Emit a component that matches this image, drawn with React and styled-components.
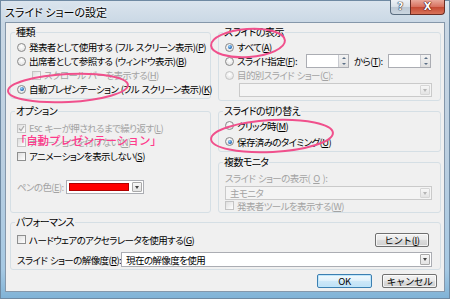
import React from "react";
import styled, { createGlobalStyle, css } from "styled-components";

const GlobalStyle = createGlobalStyle`
  html, body { margin: 0; padding: 0; background: #fff; }
  body {
    font-family: "Noto Sans CJK JP", "Noto Sans", sans-serif;
    font-size: 9.5px;
    line-height: 12px;
    letter-spacing: -0.6px;
    word-spacing: 1px;
    font-feature-settings: "palt";
  }
`;

const Window = styled.div`
  position: relative;
  width: 450px;
  height: 299px;
  box-sizing: border-box;
  padding: 0 5px 7px 5px;
  display: flex;
  flex-direction: column;
  overflow: hidden;
  background: linear-gradient(to bottom, #dbe5ee 0%, #c9d7e4 8%, #bccfe0 50%, #a6c9e3 90%, #7fb2d6 100%);
  box-shadow: inset 0 0 0 1px #6f8aa3;
`;

const TitleBar = styled.div`
  display: flex;
  align-items: flex-start;
  height: 22px;
  flex: none;
`;

const Title = styled.div`
  padding: 5px 0 0 0;
  font-size: 11px;
  line-height: 14px;
  letter-spacing: 0;
  word-spacing: 0;
  color: #000;
  text-shadow: 0 0 4px #fff, 0 0 2px #fff;
`;

const Caption = styled.div`
  display: flex;
  margin-left: auto;
`;

const CaptionButton = styled.div`
  height: 15px;
  box-sizing: border-box;
  display: flex;
  align-items: center;
  justify-content: center;
  font-family: "DejaVu Sans", sans-serif;
  font-weight: bold;
  font-size: 10px;
  letter-spacing: 0;
  color: #fff;
  border: 1px solid #5a6d80;
  border-top: none;
`;

const HelpButton = styled(CaptionButton)`
  width: 20px;
  border-right: none;
  border-radius: 0 0 0 4px;
  background: linear-gradient(to bottom, #eef2f6 0%, #d7e0e8 50%, #bcc8d4 51%, #cbd6e0 100%);
  text-shadow: 0 0 1px #223, 0 0 1px #223, 0 0 1px #223;
`;

const CloseButton = styled(CaptionButton)`
  width: 35px;
  border-radius: 0 0 4px 0;
  border-color: #6b2d24;
  background: linear-gradient(to bottom, #e9a99b 0%, #d7705d 50%, #c44a33 51%, #d9735a 100%);
  text-shadow: 0 0 1px #400, 0 0 1px #400, 0 0 1px #400;
`;

const Client = styled.div`
  flex: 1;
  display: flex;
  flex-direction: column;
  background: #f0f0f0;
  border: 1px solid #8597aa;
  padding: 3px 3px 0 4px;
  color: #000;
`;

const Columns = styled.div`
  display: grid;
  grid-template-columns: 201px 1fr;
  column-gap: 7px;
`;

const Column = styled.div`
  display: flex;
  flex-direction: column;
  gap: ${p => p.$gap || 6}px;
`;

const Group = styled.fieldset`
  margin: 0;
  margin-top: ${p => p.$mt || 0}px;
  padding: 0 8px ${p => p.$pb ?? 3}px 6px;
  border: 1px solid #d5dfe5;
  border-radius: 3px;
  min-width: 0;
  display: flex;
  flex-direction: column;
  gap: ${p => p.$gap || 0}px;
  ${p => p.$grow && css`flex: 1;`}
`;

const Legend = styled.legend`
  padding: 0 1px;
  margin-left: -2px;
  font-size: 10px;
  line-height: 12px;
  color: #000;
`;

const Choice = styled.div`
  display: flex;
  align-items: center;
  gap: 3px;
  height: ${p => p.$h || 14}px;
  flex: none;
  margin-top: ${p => p.$mt || 0}px;
  padding-left: ${p => p.$indent || 0}px;
  color: ${p => (p.$disabled ? "#a3a3a3" : "#000")};
  white-space: nowrap;
`;

const Text = styled.span`
  ${p => p.$w && css`width: ${p.$w}px; flex: none;`}
`;

const Key = styled.u`
  text-underline-offset: 1px;
`;

const Radio = styled.span`
  position: relative;
  flex: none;
  width: 9px;
  height: 9px;
  box-sizing: border-box;
  border-radius: 50%;
  border: 1px solid ${p => (p.$disabled ? "#c4c4c4" : "#8a8a8a")};
  background: radial-gradient(circle at 50% 35%, #ffffff, #dcdcdc);
  ${p => p.$checked && css`
    &::after {
      content: "";
      position: absolute;
      inset: 1.5px;
      border-radius: 50%;
      background: radial-gradient(circle at 40% 35%, #9ad8ff, #1b5fb0 70%);
    }
  `}
`;

const Box = styled.span`
  flex: none;
  display: flex;
  width: 9px;
  height: 9px;
  box-sizing: border-box;
  border: 1px solid ${p => (p.$disabled ? "#c4c4c4" : "#8e8f8f")};
  background: linear-gradient(135deg, #dedede, #ffffff);
`;

const Check = ({ checked, disabled }) => (
  <Box $disabled={disabled}>
    {checked && (
      <svg width="7" height="7" viewBox="0 0 7 7">
        <path d="M1 3.5 L3 5.5 L6 1" fill="none" stroke={disabled ? "#a8a8a8" : "#333"} strokeWidth="1.2" />
      </svg>
    )}
  </Box>
);

const Field = styled.div`
  display: flex;
  align-items: stretch;
  box-sizing: border-box;
  height: ${p => p.$h || 14}px;
  ${p => p.$w ? css`width: ${p.$w}px; flex: none;` : css`flex: 1;`}
  margin-left: ${p => p.$ml || 0}px;
  border: 1px solid ${p => (p.$disabled ? "#cacaca" : "#abadb3")};
  background: ${p => (p.$disabled ? "#f4f4f4" : "#fff")};
  color: ${p => (p.$disabled ? "#a3a3a3" : "#000")};
`;

const FieldText = styled.span`
  flex: 1;
  display: flex;
  align-items: center;
  padding-left: 4px;
  white-space: nowrap;
`;

const DropButton = styled.span`
  flex: none;
  width: 10px;
  margin: 1px;
  box-sizing: border-box;
  display: flex;
  align-items: center;
  justify-content: center;
  border: 1px solid ${p => (p.$disabled ? "#d6d6d6" : "#a9a9a9")};
  border-radius: 1px;
  background: linear-gradient(to bottom, #f7f7f7, #e3e3e3);
  &::after {
    content: "";
    border-left: 2.5px solid transparent;
    border-right: 2.5px solid transparent;
    border-top: 3px solid ${p => (p.$disabled ? "#b5b5b5" : "#444")};
  }
`;

const SpinButtons = styled.span`
  flex: none;
  width: 9px;
  display: flex;
  flex-direction: column;
  border-left: 1px solid #c9cbd1;
  background: linear-gradient(to bottom, #f4f4f4, #e0e0e0);
`;

const SpinArrow = styled.span`
  flex: 1;
  display: flex;
  align-items: center;
  justify-content: center;
  &::after {
    content: "";
    border-left: 2px solid transparent;
    border-right: 2px solid transparent;
    ${p => p.$up
      ? css`border-bottom: 2.5px solid #5b6f86;`
      : css`border-top: 2.5px solid #5b6f86;`}
  }
`;

const Swatch = styled.span`
  width: 62px;
  margin: 2px;
  background: #ff0000;
  border: 1px solid #b00000;
  box-sizing: border-box;
`;

const Row = styled.div`
  display: flex;
  align-items: center;
  gap: ${p => p.$gap || 3}px;
  height: ${p => p.$h || 15}px;
  flex: none;
  margin-top: ${p => p.$mt || 0}px;
  white-space: nowrap;
  color: ${p => (p.$disabled ? "#a3a3a3" : "#000")};
`;

const Button = styled.button`
  width: ${p => p.$w || 55}px;
  height: 14px;
  padding: 0;
  margin-left: ${p => (p.$push ? "auto" : "0")};
  margin-right: ${p => p.$mr || 0}px;
  font-family: inherit;
  font-size: 9.5px;
  letter-spacing: -0.4px;
  line-height: 12px;
  color: #000;
  border-radius: 2px;
  border: 1px solid ${p => (p.$primary ? "#3c7fb1" : "#707070")};
  background: ${p => p.$primary
    ? "linear-gradient(to bottom, #f2f9fd 0%, #e3f2fb 45%, #cde8f8 50%, #bfe0f5 100%)"
    : "linear-gradient(to bottom, #f2f2f2 0%, #ebebeb 45%, #dddddd 50%, #cfcfcf 100%)"};
  box-shadow: inset 0 0 0 1px ${p => (p.$primary ? "#bfe6fb" : "rgba(255,255,255,0.7)")};
`;

const Footer = styled.div`
  display: flex;
  justify-content: flex-end;
  gap: 10px;
  margin-top: 4px;
  padding-right: 4px;
`;

const Overlay = styled.svg`
  position: absolute;
  left: 0;
  top: 0;
  pointer-events: none;
`;

const Note = styled.div`
  position: absolute;
  left: 15px;
  top: 133px;
  font-size: 11.5px;
  line-height: 14px;
  letter-spacing: -0.2px;
  font-weight: 500;
  font-feature-settings: normal;
  color: #ff3a8c;
  white-space: nowrap;
`;

const Dropdown = ({ children, disabled, ...rest }) => (
  <Field $disabled={disabled} {...rest}>
    <FieldText>{children}</FieldText>
    <DropButton $disabled={disabled} />
  </Field>
);

const SpinBox = () => (
  <Field $w={43}>
    <FieldText />
    <SpinButtons>
      <SpinArrow $up />
      <SpinArrow />
    </SpinButtons>
  </Field>
);

export default function App() {
  return (
    <>
      <GlobalStyle />
      <Window>
        <TitleBar>
          <Title>スライド ショーの設定</Title>
          <Caption>
            <HelpButton>?</HelpButton>
            <CloseButton>X</CloseButton>
          </Caption>
        </TitleBar>
        <Client>
          <Columns>
            <Column $gap={6}>
              <Group $pb={2}>
                <Legend>種類</Legend>
                <Choice $mt={2}><Radio /><Text>発表者として使用する (フル スクリーン表示)(<Key>P</Key>)</Text></Choice>
                <Choice><Radio /><Text>出席者として参照する (ウィンドウ表示)(<Key>B</Key>)</Text></Choice>
                <Choice $indent={15} $disabled><Check disabled /><Text>スクロール バーを表示する(<Key>H</Key>)</Text></Choice>
                <Choice><Radio $checked /><Text>自動プレゼンテーション (フル スクリーン表示)(<Key>K</Key>)</Text></Choice>
              </Group>
              <Group $grow>
                <Legend>オプション</Legend>
                <Choice $mt={4} $disabled><Check checked disabled /><Text>Esc キーが押されるまで繰り返す(<Key>L</Key>)</Text></Choice>
                <Choice $disabled><Check disabled /><Text>ナレーションを付けない(<Key>N</Key>)</Text></Choice>
                <Choice><Check /><Text>アニメーションを表示しない(<Key>S</Key>)</Text></Choice>
                <Row $mt={17} $h={14} $disabled>
                  <Text $w={46}>ペンの色(<Key>E</Key>):</Text>
                  <Field $w={78}>
                    <Swatch />
                    <DropButton />
                  </Field>
                </Row>
              </Group>
            </Column>
            <Column $gap={4}>
              <Group>
                <Legend>スライドの表示</Legend>
                <Choice $mt={2}><Radio $checked /><Text>すべて(<Key>A</Key>)</Text></Choice>
                <Choice>
                  <Radio /><Text $w={66}>スライド指定(<Key>F</Key>):</Text>
                  <SpinBox />
                  <Text $w={31} style={{ marginLeft: 2 }}>から(<Key>T</Key>):</Text>
                  <SpinBox />
                </Choice>
                <Choice $disabled><Radio $disabled /><Text>目的別スライド ショー(<Key>C</Key>):</Text></Choice>
                <Row $h={14} $mt={1}>
                  <Dropdown disabled $ml={14} />
                </Row>
              </Group>
              <Group $pb={2} $gap={1}>
                <Legend>スライドの切り替え</Legend>
                <Choice $mt={1} $h={15}><Radio /><Text>クリック時(<Key>M</Key>)</Text></Choice>
                <Choice $h={15}><Radio $checked /><Text>保存済みのタイミング(<Key>U</Key>)</Text></Choice>
              </Group>
              <Group $pb={1}>
                <Legend>複数モニタ</Legend>
                <Row $mt={3} $h={14} $disabled>スライド ショーの表示(<Key>O</Key>):</Row>
                <Row $mt={1} $h={14}>
                  <Dropdown disabled>主モニタ</Dropdown>
                </Row>
                <Choice $h={11} $disabled><Check disabled /><Text>発表者ツールを表示する(<Key>W</Key>)</Text></Choice>
              </Group>
            </Column>
          </Columns>
          <Group $mt={3} $pb={2} $gap={5}>
            <Legend>パフォーマンス</Legend>
            <Row $mt={4}>
              <Check /><Text>ハードウェアのアクセラレータを使用する(<Key>G</Key>)</Text>
              <Button $w={54} $push $mr={3}>ヒント(<Key>I</Key>)</Button>
            </Row>
            <Row>
              <Text $w={101}>スライド ショーの解像度(<Key>R</Key>):</Text>
              <Dropdown $h={15}>現在の解像度を使用</Dropdown>
            </Row>
          </Group>
          <Footer>
            <Button $primary>OK</Button>
            <Button>キャンセル</Button>
          </Footer>
        </Client>
        <Overlay width="450" height="299" viewBox="0 0 450 299">
          <g fill="none" stroke="#f0508c" strokeWidth="2">
            <ellipse cx="68" cy="88" rx="60" ry="14" transform="rotate(-3 68 88)" />
            <ellipse cx="248" cy="43" rx="37" ry="14" transform="rotate(-4 248 43)" />
            <ellipse cx="272" cy="136" rx="61" ry="16" transform="rotate(-3 272 136)" />
          </g>
        </Overlay>
        <Note>「自動プレゼンテーション」</Note>
      </Window>
    </>
  );
}
